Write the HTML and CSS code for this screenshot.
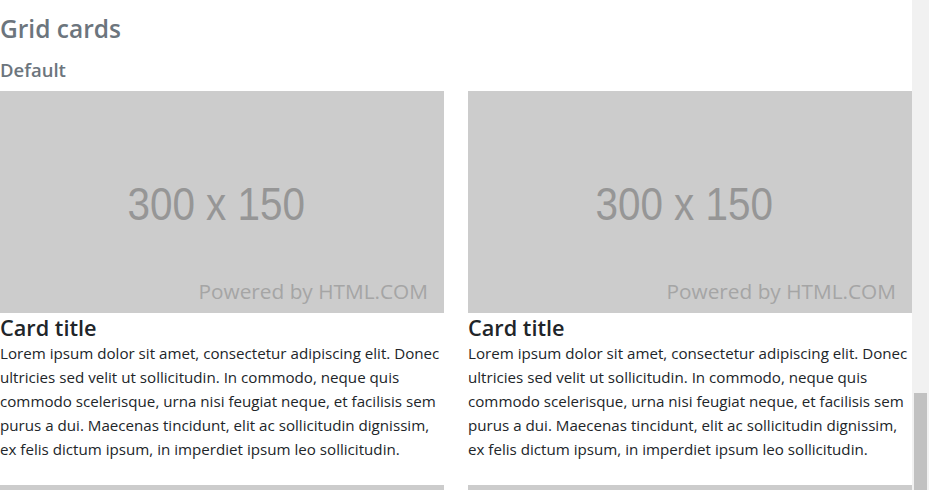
FILE: index.html
```html
<!DOCTYPE html>
<html lang="en">
<head>
<meta charset="utf-8">
<title>Grid cards</title>
<link rel="stylesheet" href="styles.css">
</head>
<body>
<div class="page">
  <main class="content">
    <h2 class="section-title">Grid cards</h2>
    <h3 class="section-sub">Default</h3>
    <div class="card-grid">
      <article class="card">
        <div class="placeholder">
          <span class="ph-size">300 x 150</span>
          <span class="ph-powered">Powered by HTML.COM</span>
        </div>
        <div class="card-body">
          <h4 class="card-title">Card title</h4>
          <p class="card-text">Lorem ipsum dolor sit amet, consectetur adipiscing elit. Donec ultricies sed velit ut sollicitudin. In commodo, neque quis commodo scelerisque, urna nisi feugiat neque, et facilisis sem purus a dui. Maecenas tincidunt, elit ac sollicitudin dignissim, ex felis dictum ipsum, in imperdiet ipsum leo sollicitudin.</p>
        </div>
      </article>
      <article class="card">
        <div class="placeholder">
          <span class="ph-size">300 x 150</span>
          <span class="ph-powered">Powered by HTML.COM</span>
        </div>
        <div class="card-body">
          <h4 class="card-title">Card title</h4>
          <p class="card-text">Lorem ipsum dolor sit amet, consectetur adipiscing elit. Donec ultricies sed velit ut sollicitudin. In commodo, neque quis commodo scelerisque, urna nisi feugiat neque, et facilisis sem purus a dui. Maecenas tincidunt, elit ac sollicitudin dignissim, ex felis dictum ipsum, in imperdiet ipsum leo sollicitudin.</p>
        </div>
      </article>
      <article class="card">
        <div class="placeholder"></div>
      </article>
      <article class="card">
        <div class="placeholder"></div>
      </article>
    </div>
  </main>
  <div class="scrollbar"><div class="scroll-thumb"></div></div>
</div>
</body>
</html>
```

FILE: styles.css
```css
html, body {
  margin: 0;
  padding: 0;
  height: 490px;
  overflow: hidden;
  background: #fff;
}
body {
  font-family: "Open Sans", "Noto Sans", sans-serif;
  color: #212529;
}
.page {
  display: flex;
  height: 490px;
}
.content {
  flex: 1;
  min-width: 0;
  overflow: hidden;
}
.scrollbar {
  width: 17px;
  flex: none;
  background: #f1f1f1;
  display: flex;
  flex-direction: column;
  justify-content: flex-end;
  align-items: center;
}
.scroll-thumb {
  width: 13px;
  height: 97px;
  background: #c1c1c1;
}
.section-title {
  margin: 12px 0 0;
  font-size: 24.5px;
  font-weight: 600;
  line-height: 34px;
  color: #6c757d;
}
.section-sub {
  margin: 12px 0 0;
  font-size: 18.5px;
  font-weight: 600;
  line-height: 24px;
  color: #6c757d;
}
.card-grid {
  margin-top: 9px;
  display: grid;
  grid-template-columns: 1fr 1fr;
  column-gap: 24px;
  row-gap: 24px;
}
.placeholder {
  aspect-ratio: 2 / 1;
  background: #cccccc;
  display: grid;
}
.ph-size, .ph-powered {
  grid-area: 1 / 1;
}
.ph-size {
  place-self: center;
  margin-left: -12px;
  margin-top: 2px;
  font-family: "Liberation Sans", Arial, sans-serif;
  font-size: 47px;
  color: #969696;
  transform: scaleX(0.86);
}
.ph-powered {
  place-self: end end;
  margin: 0 16px 8px 0;
  font-family: "Open Sans", sans-serif;
  font-size: 20.8px;
  color: #a5a5a5;
}
.card-body {
  padding-top: 2px;
}
.card-title {
  margin: 0;
  font-size: 21.7px;
  font-weight: 600;
  line-height: 26px;
}
.card-text {
  margin: 0;
  font-size: 15.15px;
  line-height: 24px;
}
```
